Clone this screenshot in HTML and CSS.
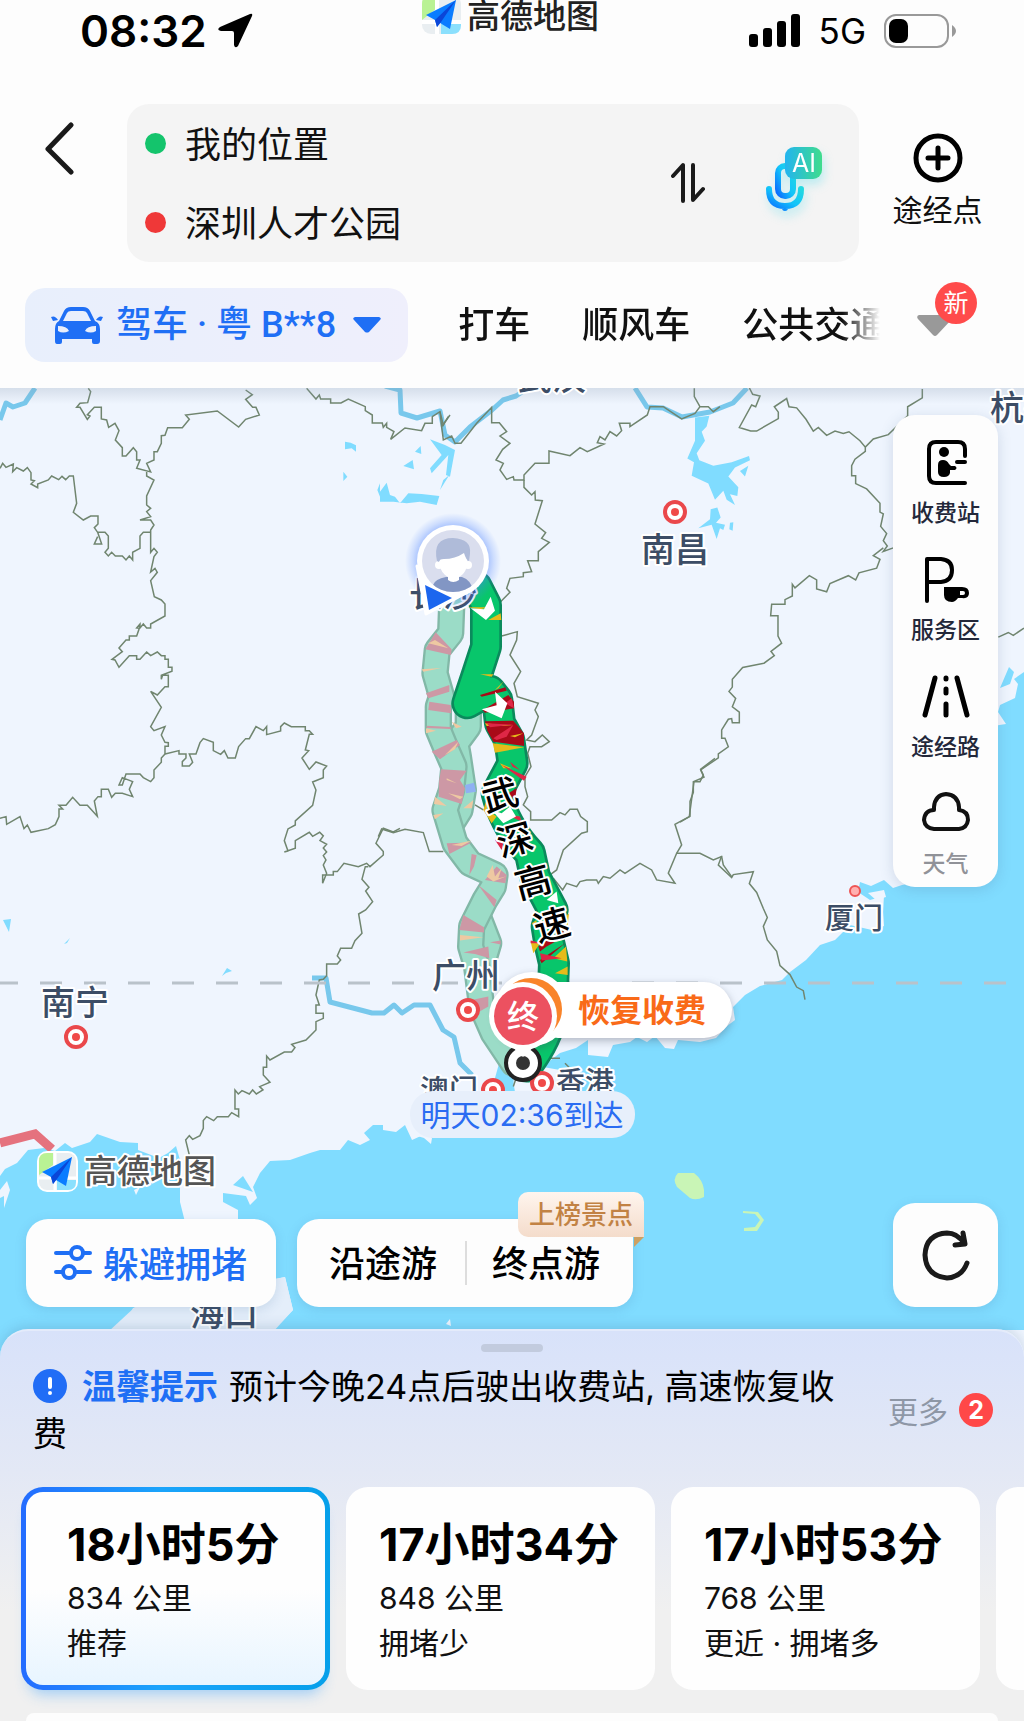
FILE: index.html
```html
<!DOCTYPE html>
<html lang="zh-CN">
<head>
    <meta charset="UTF-8">
    <meta name="viewport" content="width=device-width, initial-scale=1.0">
    <title>高德地图</title>
    <link rel="stylesheet" href="styles.css">
</head>
<body>
    <header class="header">
        <div class="status-bar">
            <div class="status-time">
                <span>08:32</span>
                <svg width="36" height="36" viewBox="0 0 36 36"><path d="M33 1Q36 0 35 3L21 33Q18 36 17 32V20Q17 18 15 18H4Q-1 17 3 14Z"/></svg>
            </div>
            <div class="brand">
                <svg width="39" height="39" viewBox="0 0 39 39">
                    <rect width="39" height="39" rx="9" fill="#e9eef1"/>
                    <path d="M0 9Q0 0 9 0H15V13L0 25Z" fill="#b9f294"/>
                    <path d="M19 39V28H39V30Q39 39 30 39Z" fill="#8be0fd"/>
                    <path d="M15 0V39M0 27H39" stroke="#fff" stroke-width="4"/>
                    <path d="M34 5L4 20L13 25L15 32L18 28L28 34Z" fill="#0a7cff"/>
                    <path d="M34 5L13 25L15 32L19 27Z" fill="#0b46d8"/>
                </svg>
                <span>高德地图</span>
            </div>
            <div class="status-icons">
                <svg width="52" height="34" viewBox="0 0 52 34"><rect y="20" width="9" height="13" rx="3"/><rect x="14" y="14" width="9" height="19" rx="3"/><rect x="28" y="7" width="9" height="26" rx="3"/><rect x="42" y="0" width="9" height="33" rx="3"/></svg>
                <span>5G</span>
                <svg width="72" height="34" viewBox="0 0 72 34"><rect x="1" y="1" width="63" height="32" rx="11" fill="none" stroke="#999" stroke-width="2"/><rect x="5" y="5" width="19" height="24" rx="7"/><path d="M68 11Q72 14 72 17T68 23Z" fill="#999"/></svg>
            </div>
        </div>

        <div class="route-row">
            <button class="back" aria-label="返回">
                <svg width="30" height="54" viewBox="0 0 30 54"><path d="M27 3L4 27L27 50" fill="none" stroke="#1a1a1a" stroke-width="5" stroke-linecap="round" stroke-linejoin="round"/></svg>
            </button>
            <div class="route-box">
                <div class="route-fields">
                    <label class="field"><i class="dot start"></i><input type="text" value="我的位置" aria-label="起点"></label>
                    <label class="field"><i class="dot end"></i><input type="text" value="深圳人才公园" aria-label="终点"></label>
                </div>
                <button class="swap" aria-label="交换">
                    <svg width="34" height="42" viewBox="0 0 34 42"><path d="M2 14L12 3V39M22 3V38L32 27" fill="none" stroke="#1a1a1a" stroke-width="4" stroke-linecap="round" stroke-linejoin="round"/></svg>
                </button>
                <button class="mic" aria-label="语音">
                    <svg width="60" height="72" viewBox="0 0 60 72">
                        <defs>
                            <linearGradient id="micFill" x1="0" y1="1" x2="1" y2="0"><stop offset="0" stop-color="#0a6cff"/><stop offset=".5" stop-color="#12c4fa"/><stop offset="1" stop-color="#22d8e0"/></linearGradient>
                            <linearGradient id="aiFill"><stop offset="0" stop-color="#22b4f0"/><stop offset="1" stop-color="#40dc8c"/></linearGradient>
                        </defs>
                        <g fill="none" stroke="url(#micFill)" stroke-width="6" stroke-linecap="round"><rect x="13" y="19" width="15" height="30" rx="7"/><path d="M4 42Q4 59 20 59T36 42M20 59L20 61"/></g>
                        <rect x="20" y="0" width="37" height="32" rx="9" fill="url(#aiFill)"/>
                        <text x="39" y="25" class="ai-text">AI</text>
                    </svg>
                </button>
            </div>
            <button class="waypoint">
                <svg width="50" height="50" viewBox="0 0 50 50"><g fill="none" stroke="#000" stroke-width="5" stroke-linecap="round"><circle cx="25" cy="25" r="22"/><path d="M25 15V35M15 25H35"/></g></svg>
                <span>途经点</span>
            </button>
        </div>

        <nav class="modes">
            <button class="mode active">
                <svg width="52" height="37" viewBox="0 0 52 37"><path d="M8 14L13 4Q15 0 20 0H32Q37 0 39 4L44 14Q49 16 49 22V34Q49 37 46 37H43Q41 37 41 35V32H11V35Q11 37 9 37H6Q4 37 4 34V22Q4 16 8 14ZM12 14H40L36 6Q35 4 32 4H20Q17 4 16 6Z" fill-rule="evenodd"/><path d="M7 19Q16 19 18 24Q12 27 7 24ZM45 19Q36 19 34 24Q40 27 45 24Z" fill="#e8eefb"/><path d="M0 10Q4 8 7 13L2 14ZM52 10Q48 8 45 13L50 14Z"/></svg>
                <span class="plate">驾车 · 粤 B**8</span>
                <svg width="28" height="16" viewBox="0 0 28 16"><path d="M2 0H26Q29 1 27 3L16 15Q14 16 12 15L1 3Q-1 1 2 0Z"/></svg>
            </button>
            <div class="mode-list">
                <button class="mode">打车</button>
                <button class="mode">顺风车</button>
                <button class="mode">公共交通</button>
            </div>
            <button class="more-modes" aria-label="更多方式">
                <svg width="36" height="21" viewBox="0 0 36 21"><path d="M2 0H34Q37 1 35 4L20 20Q18 22 16 20L1 4Q-1 1 2 0Z" fill="#999"/></svg>
                <span class="new-badge">新</span>
            </button>
        </nav>
    </header>

    <main class="map">
        <svg class="map-canvas" viewBox="0 388 1024 970">
            <defs>
                <linearGradient id="topShade" x1="0" y1="0" x2="0" y2="1"><stop offset="0" stop-color="#8a9bb0" stop-opacity=".25"/><stop offset="1" stop-color="#8a9bb0" stop-opacity="0"/></linearGradient>
                <radialGradient id="glow"><stop offset=".65" stop-color="#4a80ff" stop-opacity=".55"/><stop offset=".85" stop-color="#4a80ff" stop-opacity=".2"/><stop offset="1" stop-color="#4a80ff" stop-opacity="0"/></radialGradient>
                <clipPath id="avatarClip"><circle cx="453" cy="561" r="31"/></clipPath>
            </defs>
            <rect y="388" width="1024" height="970" fill="#eff5fe"/>

            <!-- sea -->
            <path class="sea" d="M1024 672L1014 679L1018 684L1015 698L1000 705L998 712L1006 724L980 728V870L902 885L893 888L884 880L871 886L860 882L858 892L870 900L884 896L883 912L884 926L872 930L850 925L835 940L820 945L806 960L790 972L782 980L760 986L745 995L733 1007L735 1020L727 1026L716 1038L700 1042L678 1040L674 1049L665 1048L655 1036L647 1042L637 1037L630 1042L613 1045L608 1057L588 1055V1040L576 1048L560 1053L551 1060L543 1067L560 1070L572 1075V1092L515 1092L513 1080L502 1062L497 1080L500 1100L412 1140L405 1125L396 1132L383 1130V1125H373L364 1133L370 1140L360 1145L348 1140L340 1150H320L310 1153L290 1160L270 1161L260 1173L253 1187L257 1198L250 1205L246 1196L223 1193V1202L238 1210V1222H185L180 1202V1160L176 1146L168 1153L159 1158L138 1150V1143L120 1142L97 1134L90 1142L72 1148L65 1143L55 1151L44 1148L28 1150L17 1163L5 1169L0 1176V1358H110L133 1308L285 1277L293 1310L273 1330H1024Z"/>
            <path class="sea" d="M500 1060L515 1070L512 1092H500L495 1078ZM233 1185L243 1176L253 1192ZM1000 688L1009 667L1014 672L1010 684Z"/>
            <path d="M0 1190L7 1181L10 1190L4 1208L4 1196L0 1198ZM134 1190L140 1187L136 1195ZM414 1135L422 1130L432 1138L431 1144L424 1138ZM868 893L884 890L886 897L876 900ZM446 1324L450 1319L451 1326Z" fill="#eff5fe"/>
            <path d="M135 1307L285 1277L293 1310L273 1332H108Z" fill="#e4eefa"/>
            <path d="M678 1173H694Q703 1180 704 1190V1197Q696 1201 690 1198L677 1187Q672 1179 678 1173ZM743 1211L758 1212L764 1220L757 1231H744V1228L755 1227L760 1220L755 1214L743 1213Z" fill="#c9f5b6"/>

            <!-- lakes -->
            <g class="sea" transform="translate(380 380) scale(.3333)">
                <path d="M150 178L195 195L225 210L210 290L198 285L205 225L155 280L150 265L185 225ZM105 215L122 198L124 222ZM70 258L98 240L102 268ZM0 335L20 308L30 345L45 350L60 370L85 340L125 342L178 348L170 375L120 365L80 370L40 365L0 365Z"/>
                <path d="M190 300L208 285L180 330ZM0 310L0 350L-8 330ZM-105 185L-88 188L-72 196L-72 215L-85 205L-105 208ZM-110 275L-98 290L-110 303Z"/>
            </g>
            <g class="sea" transform="translate(680 380) scale(.3333 .3571)">
                <path d="M45 105L88 100L80 130L65 145L75 170L50 205L58 225L100 240L155 230L207 213L210 225L165 245L145 270L175 300L172 325L150 320L165 350L140 335L130 310L105 335L85 290L35 268L42 230L22 220L45 170Z"/>
                <path d="M92 362L112 357L122 385L108 400L135 405L130 420L120 415L110 445L95 405L55 415L90 390ZM150 400L160 398L158 422L148 418ZM180 255L205 240L195 270Z"/>
            </g>
            <path class="sea" d="M3 920L11 919L9 932ZM64 944L70 938L67 943ZM222 976L227 968L232 971L226 973Z"/>

            <!-- rivers -->
            <g class="river">
                <path d="M35 388L25 403L13 407L6 403L0 420"/>
                <path d="M385 386L400 390L401 413L417 418L440 411L445 435L455 442L470 427L492 410L503 400L516 396L528 388"/>
                <path d="M635 388L647 407L663 408L682 417L710 412L733 403L747 388"/>
                <path d="M312 978H326L330 1002L372 1013H384L394 1005L402 1013L414 1005H430L443 1030L454 1037L460 1063L472 1075"/>
            </g>

            <!-- province borders -->
            <g class="border" transform="translate(0 380) scale(.3333)">
                <path d="M265 25L272 35L263 68L240 70L230 82L240 82L262 118L270 108L262 104L283 82H304V117L320 120L326 142L345 130L357 152L346 180L367 203V228H378L400 203L410 215V240H420L410 265L452 276L440 250L462 240V215H472L484 190V167L495 166L503 143H547L568 118L557 105L652 93L716 141L737 118L778 105L768 82H758L737 58L757 44L737 30"/>
                <path d="M440 276V288L462 300L440 348V375L452 385L440 395L452 410L420 420H452L462 435L452 450V517L462 505L472 517L462 530L452 576L465 565L472 577L452 602L463 650L484 660L495 672V708L452 732V744H440L430 732L420 744V732L410 744L418 745L410 768H388V780H378L357 804L367 815L336 838L345 840L357 862L388 827H410V838H420L440 816L452 827L472 816L484 827H495V838H505V862H516V874L484 886V898L488 885L505 886V920H495L472 945L452 934L484 982L452 1040L462 1052L495 1040L484 1065L495 1087L505 1088V1099H495V1122L537 1112V1122H558V1134L547 1145V1158H568L578 1147L568 1122H588L600 1088L610 1076L640 1087V1112L662 1123L673 1112L684 1134H706L716 1100L737 1076H748L768 1040L790 1052L800 1040V1064L842 1053V1040L853 1029L874 1040H916V1052H928L938 1063H928L916 1110L926 1112L906 1134L928 1168L948 1146L980 1158L970 1170V1193L938 1206L948 1230L938 1276L886 1323V1335L864 1347L853 1382L864 1413L853 1416L886 1405V1382L928 1357L938 1369L959 1357L970 1368L960 1382L980 1393L970 1404L980 1416L970 1427L978 1440L970 1455L980 1480L968 1510V1485H1000V1475H1012L1032 1450L1075 1460L1100 1450L1110 1460L1150 1425V1415L1128 1390L1150 1345L1180 1356L1200 1345"/>
                <path d="M0 265L8 250L18 262L40 252L38 275L50 263L70 273L82 263L93 278V300L103 302L93 312L113 323V312L145 300L155 288L176 299L186 289L197 299L208 288H220L230 370L220 397L250 420L272 408H294V432L283 443L293 457H315L325 468V505L315 517L325 528L335 517L346 528H367L378 540L388 528L398 540V517L420 505V468L430 457H452M293 457L305 492H283L293 470"/>
                <path d="M495 1122L484 1134V1147L462 1170V1193L452 1205L430 1193L420 1182H378L367 1215H357L367 1193L398 1205L388 1228L398 1250L367 1240H346L335 1252L325 1228H304V1250H294L283 1263L292 1309L262 1276H240L218 1252L198 1276H177L188 1287H177V1310L166 1334L145 1346L93 1357L82 1335L72 1346L60 1310L20 1333L18 1310L0 1315"/>
                <path d="M920 25L948 57L958 45L962 57H992V69H1023L1045 57L1096 80V92L1117 105V129H1147L1150 142L1160 130V142L1182 155L1172 178L1215 144L1265 152L1275 130H1297V110L1320 95L1330 135L1345 110"/>
            </g>
            <g class="border" transform="translate(0 840) scale(.3333)">
                <path d="M1105 80H1096L1086 118L1107 142L1097 153L1118 185L1097 210L1076 222L1086 280L1065 302L1055 325H1022L1012 348L1022 360L1012 372H980V407L970 418L958 420L948 465L958 495H948V520H970V535L948 545V570L918 600L875 613L885 623L875 636H853L810 660L800 648V682H790V705L810 727L779 740L789 750L769 762L758 750L748 762L726 752L715 762L705 750V807H716V830L695 818L685 830H652L641 842L620 830L610 842V865L600 887L578 898L568 887L557 900L568 945"/>
            </g>
            <g class="border" transform="translate(380 380) scale(.3333)">
                <path d="M180 95L185 140L210 105M185 140L190 180L215 168L225 190H243L290 130L335 82V128H358L380 155L360 168L390 190L368 208L348 240L370 250L360 270L380 298L400 290L402 300H432V285L465 250H507V213L570 227L600 203L622 215L672 192L652 188L660 170L675 180L690 155L710 168L725 152L718 130H750V140L802 105L810 80H850L905 117L945 100L960 80L943 50V25M960 80H985L1000 95L1020 80"/>
                <path d="M432 300V322L455 345L465 335L466 360L487 362L465 432L497 458L485 475L508 487L475 515V542H443L455 575L430 578V590L390 595L380 625L390 637L355 672M365 768L412 755L410 780L390 825L422 875L402 910L412 950L475 970L465 990L475 1010L455 1065L440 1080L465 1085L487 1065L508 1085L485 1100H450L443 1120L453 1160L435 1190V1220L443 1250L430 1275L452 1295V1320L515 1320L540 1298L555 1305L570 1288H592L602 1310L622 1325V1355L605 1360L550 1410L530 1470L510 1485M520 1495L548 1530L560 1510L590 1520L600 1505L620 1500H650L655 1510L670 1490L690 1495L720 1470L735 1480L780 1450L815 1470L830 1500L885 1510L865 1480L890 1420L905 1395L885 1333L928 1310L942 1205H960L970 1185L962 1168L1005 1135"/>
                <path d="M-5 1370L5 1347L40 1358L75 1348L130 1358L148 1415H190M285 1275L310 1290M400 2120L410 2090M510 2035H540M555 2050L570 2065M890 1420H960L1000 1440L1025 1430L1030 1455L1055 1490"/>
            </g>
            <g class="border" transform="translate(680 380) scale(.3333 .3571)">
                <path d="M208 22L218 40L240 45L227 75L215 70L178 133L212 143H230L295 108V90L283 75L320 52L327 75L350 78L378 110L400 143L415 133L440 155L465 143L490 150L507 145L540 170L556 188L580 165L625 153L650 130L683 100V75L727 50V25M556 188V200L525 222L515 240V268H527V290L560 305L600 345V370L610 375L602 410L620 430L610 450L622 465L610 480L640 470M610 470L580 492L600 502L590 527L537 540L527 560L505 548L450 570L440 593L410 585V560L388 548L345 582L337 572V605L315 615V628H275L272 660H294V717L305 737L273 760L283 772L252 793L188 805L157 838V860L147 872L167 892L157 915L178 930V960H157L155 948L145 950L125 980V1003H135L145 1027L115 1047V1058L62 1092L72 1112L40 1125V1155L30 1180V1222L0 1238"/>
                <path d="M125 1333L115 1358L155 1393L160 1385L220 1377L208 1410L230 1435L250 1480L262 1505L250 1530L262 1568L290 1600L300 1640L330 1665L350 1700L370 1710L375 1735M955 720L985 707L1000 715L1032 695"/>
            </g>
            <path d="M-4 983H570M632 983H1024" stroke="#b9c2ca" stroke-width="3" stroke-dasharray="22 22"/>
            <path d="M0 1143L35 1134L52 1149" fill="none" stroke="#e5727e" stroke-width="9"/>
            <rect y="388" width="1024" height="16" fill="url(#topShade)"/>

            <!-- city names -->
            <g class="city">
                <text x="518" y="390">武汉</text>
                <text x="641" y="562">南昌</text>
                <text x="41" y="1015">南宁</text>
                <text x="990" y="420">杭州</text>
                <text x="190" y="1326">海口</text>
                <text x="825" y="929" class="small">厦门</text>
            </g>
            <g class="spot"><circle cx="675" cy="512" r="10"/><circle cx="76" cy="1037" r="10"/></g>
            <g class="spot-core"><circle cx="675" cy="512" r="4"/><circle cx="76" cy="1037" r="4"/></g>
            <circle cx="855" cy="891" r="5" fill="#ffb0b0" stroke="#ee5555" stroke-width="2"/>

            <!-- alternative routes -->
            <g transform="translate(380 380) scale(.3333)">
                <path class="alt-edge" d="M265 1000V1040L228 1090L235 1130L250 1230L240 1290L215 1330M295 1610L326 1690L305 1760"/>
                <path class="alt-fill" d="M265 1000V1040L228 1090L235 1130L250 1230L240 1290L215 1330M295 1610L326 1690L305 1760"/>
                <path class="alt-edge" d="M215 680L212 760L172 810L165 880L185 950L175 980V1050L200 1110L222 1160L215 1230L195 1290L225 1390L270 1450L345 1485L340 1520L315 1560L275 1640L272 1700L290 1760L305 1880L340 1960L400 2050"/>
                <path class="alt-fill" d="M215 680L212 760L172 810L165 880L185 950L175 980V1050L200 1110L222 1160L215 1230L195 1290L225 1390L270 1450L345 1485L340 1520L315 1560L275 1640L272 1700L290 1760L305 1880L340 1960L400 2050"/>
                <path fill="#cd98a5" d="M167 757L215 808L213 825L136 808ZM138 940L208 915V935L145 955ZM148 965L212 975L214 1000L145 990ZM140 1037L212 1041V1047L140 1044ZM155 1115L230 1080L240 1095L180 1138ZM183 1168L260 1172L240 1200L255 1225L245 1272L176 1250L177 1205ZM200 1390L275 1388L208 1422ZM275 1422L290 1426L282 1460L268 1485ZM315 1500L350 1460L380 1485L376 1510ZM295 1515L350 1560L343 1582ZM250 1605L312 1642V1658L238 1650ZM250 1718L325 1700L328 1735L285 1722ZM330 1687L362 1682V1694ZM275 1860L325 1850V1880L290 1900Z"/>
                <path fill="#eec9a2" d="M125 868L185 864L130 875ZM138 1045L168 1052L138 1060ZM165 1250L200 1278L162 1272ZM160 1305L190 1300L165 1318ZM215 1025L245 1040L228 1045ZM320 1490L338 1455L345 1490L365 1465L355 1495L378 1490L340 1505ZM240 1665L310 1672L240 1682ZM250 1285L280 1260L276 1285ZM145 790L205 805L165 780ZM195 1125L235 1085L225 1108ZM215 1395L275 1382L245 1398ZM200 1195L230 1210L200 1200ZM205 1240L250 1250L240 1258Z"/>
                <path fill="#8fb0f2" d="M255 1215L282 1208L288 1235L258 1240Z"/>
            </g>

            <!-- selected route -->
            <g transform="translate(380 380) scale(.3333)">
                <path class="route-edge" d="M290 620L318 675V800L292 880L262 970L330 932L352 960L360 1030L388 1080L398 1150L350 1240Q375 1340 450 1420L465 1490L518 1590L500 1640L508 1690L522 1750L517 1880Q515 1960 440 2060"/>
                <path class="route-fill" d="M290 620L318 675V800L292 880L262 970L330 932L352 960L360 1030L388 1080L398 1150L350 1240Q375 1340 450 1420L465 1490L518 1590L500 1640L508 1690L522 1750L517 1880Q515 1960 440 2060"/>
                <path fill="#a90a18" d="M300 945L376 922L380 932L305 950ZM308 990L385 945L402 965V985L315 998ZM315 1024L400 1022L432 1060V1098L340 1085L322 1052ZM385 1240L410 1225L405 1260ZM475 1700L545 1650L562 1665L500 1700L480 1715ZM480 1740L555 1690L485 1750Z"/>
                <path fill="#e6bb1a" d="M262 682H330L300 688ZM325 720L362 700L364 720ZM300 883H340L335 890ZM345 930L372 903L355 925ZM315 1030L400 1038L320 1038ZM338 1090L433 1102L345 1118ZM360 1150L395 1165L370 1165ZM310 1290L322 1250V1290L350 1310L335 1330ZM452 1685L480 1690L460 1720ZM520 1735L558 1700L562 1745ZM525 1780L563 1760V1785ZM548 1620L567 1600L563 1640ZM455 1630L470 1620L468 1650ZM390 1068L430 1060L405 1072Z"/>
                <path fill="#de2746" d="M320 1030L400 1034L330 1042ZM340 1075L400 1035L380 1070L350 1080ZM375 970L395 955L402 985ZM365 1155L440 1190L432 1202ZM370 1300L420 1310L425 1325ZM452 1682L490 1690L452 1690ZM480 1720L545 1735L485 1742ZM345 1380L375 1370L365 1410ZM390 1145L420 1170L398 1160Z"/>
                <path fill="#fff" d="M272 685L312 688L332 650L345 692L318 720ZM305 988L350 976L345 935L382 970L365 1015ZM335 1290L365 1300L390 1280L408 1310L370 1330ZM500 1560L530 1535L535 1570Z"/>
            </g>
            <g class="road-name">
                <text transform="translate(500 795) rotate(-15)" y="13">武</text>
                <text transform="translate(515 840) rotate(-15)" y="13">深</text>
                <text transform="translate(533 882) rotate(-15)" y="13">高</text>
                <text transform="translate(552 925) rotate(-15)" y="13">速</text>
            </g>
            <g class="city">
                <text x="409" y="607">长沙</text>
                <text x="432" y="988">广州</text>
                <text x="420" y="1101" class="small">澳门</text>
                <text x="556" y="1093" class="small">香港</text>
            </g>
            <g class="spot"><circle cx="468" cy="1010" r="10"/><circle cx="493" cy="1090" r="10"/><circle cx="542" cy="1083" r="10"/></g>
            <g class="spot-core"><circle cx="468" cy="1010" r="4"/><circle cx="493" cy="1090" r="4"/><circle cx="542" cy="1083" r="4"/></g>

            <!-- my position -->
            <circle cx="453" cy="561" r="48" fill="url(#glow)"/>
            <path d="M417 566L426 614L472 590Z" fill="#fff" stroke="#fff" stroke-width="3" stroke-linejoin="round"/>
            <circle cx="453" cy="561" r="36" fill="#fff"/>
            <g clip-path="url(#avatarClip)">
                <rect x="420" y="528" width="66" height="66" fill="#dadeee"/>
                <path d="M433 594V585Q435 579 446 577H462Q472 580 474 594Z" fill="#8296c4"/>
                <circle cx="439" cy="565" r="4" fill="#fff"/><circle cx="468" cy="565" r="4" fill="#fff"/>
                <path d="M440 550H467V566Q465 574 459 577V580Q453 584 448 580V577Q441 573 440 566Z" fill="#fff"/>
                <path d="M437 561Q432 538 453 538Q472 539 470 554L469 561Q466 560 464 553Q455 559 444 559Q439 559 439 562Z" fill="#afbbd9"/>
            </g>
            <path d="M425 585L452 598L429 610Z" fill="#1c66ee"/>

            <!-- destination -->
            <g class="lift">
                <rect x="530" y="982" width="202" height="56" rx="28" fill="#fff"/>
                <circle cx="532" cy="1009" r="37" fill="#fff"/>
            </g>
            <circle cx="531" cy="1009" r="31" fill="#f9842a"/>
            <circle cx="523" cy="1063" r="17" fill="#fff" stroke="#222" stroke-width="4"/>
            <circle cx="523" cy="1063" r="7" fill="#333"/>
            <path d="M505 1040L523 1057L541 1040Z" fill="#fff"/>
            <circle cx="523" cy="1016" r="34" fill="#fff"/>
            <circle cx="523" cy="1016" r="29" fill="#ec5160"/>
            <text x="523" y="1028" class="pin-text">终</text>
            <text x="578" y="1022" class="toll-text">恢复收费</text>
            <rect x="410" y="1091" width="225" height="47" rx="23" fill="#e7effb"/>
            <text x="522" y="1126" class="arrive-text">明天02:36到达</text>

            <!-- watermark -->
            <g transform="translate(38 1152)">
                <rect x="-1" y="-1" width="41" height="41" rx="10" fill="#fff"/>
                <rect x="1" y="1" width="37" height="37" rx="8" fill="#e9eef1"/>
                <path d="M1 9Q1 1 9 1H15V13L1 23Z" fill="#b9f294"/>
                <path d="M19 38V28H38V30Q38 38 30 38Z" fill="#8be0fd"/>
                <path d="M17 1V38M1 26H38" stroke="#fff" stroke-width="3"/>
                <path d="M34 5L4 20L13 25L15 32L18 28L28 34Z" fill="#0a7cff"/>
                <path d="M34 5L13 25L15 32L19 27Z" fill="#0b46d8"/>
            </g>
            <text x="84" y="1183" class="watermark">高德地图</text>
        </svg>

        <div class="side-tools">
            <button>
                <svg width="48" height="48" viewBox="0 0 48 48"><path d="M43 17V10Q43 3 36 3H14Q7 3 7 10V37Q7 44 14 44H43M35 23H43" fill="none" stroke="#000" stroke-width="4" stroke-linecap="round" stroke-linejoin="round"/><circle cx="22" cy="13" r="5"/><path d="M16 26Q16 21 21 21Q25 21 27 25L29 27H33Q36 29 33 31H28V34Q27 38 22 38Q16 38 16 33Z"/></svg>
                <span>收费站</span>
            </button>
            <button>
                <svg width="48" height="48" viewBox="0 0 48 48"><path d="M5 45V3H19Q30 4 30 14Q30 25 19 26H5" fill="none" stroke="#000" stroke-width="4" stroke-linecap="round" stroke-linejoin="round"/><path d="M22 31H40Q47 31 47 37T40 42H36Q33 46 30 46Q22 46 22 39ZM38 35V39H41Q43 39 43 37T41 35Z" fill-rule="evenodd"/></svg>
                <span>服务区</span>
            </button>
            <button>
                <svg width="48" height="48" viewBox="0 0 48 48"><path d="M13 5L3 42M35 5L45 42M24 5V6M24 16V20M24 31V42" fill="none" stroke="#000" stroke-width="5" stroke-linecap="round"/></svg>
                <span>途经路</span>
            </button>
            <button class="off">
                <svg width="48" height="48" viewBox="0 0 48 48"><path d="M12 20V17Q13 5 24 4Q36 5 37 17V20Q46 21 46 30Q45 38 37 39H12Q3 38 2 30Q3 20 12 20Z" fill="none" stroke="#111" stroke-width="4" stroke-linejoin="round"/></svg>
                <span>天气</span>
            </button>
        </div>

        <div class="map-actions">
            <button class="panel avoid">
                <svg width="38" height="36" viewBox="0 0 38 36"><g fill="none" stroke="#1f6ff5" stroke-width="4" stroke-linecap="round"><path d="M2 9H15M30 9H36M2 28H8M23 28H36"/><circle cx="23" cy="9" r="6"/><circle cx="15" cy="28" r="6"/></g></svg>
                <span>躲避拥堵</span>
            </button>
            <div class="panel tours">
                <button>沿途游</button>
                <button>终点游</button>
                <span class="rank-badge">上榜景点</span>
            </div>
            <button class="panel refresh" aria-label="刷新">
                <svg width="50" height="52" viewBox="0 0 50 52"><path d="M46 34Q41 48 26 49Q5 47 4 26Q5 5 26 4Q36 4 43 14M42 4L44 15L34 16" fill="none" stroke="#1a1a1a" stroke-width="5" stroke-linecap="round" stroke-linejoin="round"/></svg>
            </button>
        </div>
    </main>

    <section class="sheet">
        <div class="handle"></div>
        <div class="notice">
            <p><svg width="34" height="34" viewBox="0 0 34 34"><circle cx="17" cy="17" r="17" fill="#216df6"/><path d="M17 10V18M17 24V24" stroke="#fff" stroke-width="4" stroke-linecap="round"/></svg><strong>温馨提示</strong>预计今晚24点后驶出收费站, 高速恢复收费</p>
            <a href="#" class="notice-more">更多<b>2</b></a>
        </div>
        <div class="plans">
            <button class="plan selected"><strong>18小时5分</strong><span>834 公里</span><span>推荐</span></button>
            <button class="plan"><strong>17小时34分</strong><span>848 公里</span><span>拥堵少</span></button>
            <button class="plan"><strong>17小时53分</strong><span>768 公里</span><span>更近 · 拥堵多</span></button>
            <button class="plan" aria-label="更多方案"></button>
        </div>
        <div class="detail"></div>
    </section>
</body>
</html>
```
FILE: styles.css
```css
* { margin: 0; padding: 0; box-sizing: border-box; }
body { font-family: Inter, "Noto Sans CJK SC", sans-serif; background: #f0f0f0; color: #111; min-height: 100vh; display: flex; flex-direction: column; overflow-x: hidden; }
button, input { font: inherit; color: inherit; background: none; border: none; }
button { cursor: pointer; }
svg { display: block; flex: none; }
svg text { font-family: "Noto Sans CJK SC", sans-serif; }

/* Header */
.header { background: #fdfdfd; padding-bottom: 26px; }
.status-bar { display: grid; grid-template-columns: 1fr auto 1fr; height: 62px; }
.status-time { display: flex; align-items: center; gap: 10px; padding-left: 80px; font-size: 44px; font-weight: 600; color: #000; }
.brand { display: flex; align-items: center; gap: 6px; height: 28px; padding-right: 3px; font-size: 33px; font-weight: 500; color: #222; }
.status-icons { display: flex; align-items: center; justify-content: flex-end; gap: 18px; padding-right: 68px; font-size: 35px; color: #000; }
.route-row { display: grid; grid-template-columns: 127px minmax(0, 1fr) 165px; margin-top: 42px; }
.back { align-self: start; padding: 18px 0 0 44px; }
.route-box { display: flex; align-items: center; height: 158px; padding: 0 34px 0 18px; background: #f4f4f4; border-radius: 22px; }
.route-fields { flex: 1; min-width: 0; }
.field { display: flex; align-items: center; gap: 19px; height: 79px; }
.field input { flex: 1; min-width: 0; font-size: 36px; padding-bottom: 4px; outline: none; }
.dot { width: 21px; height: 21px; border-radius: 50%; background: #14c46c; }
.dot.end { background: #ef3838; }
.swap { margin-right: 60px; }
.mic { filter: drop-shadow(2px 6px 5px rgba(30, 210, 230, 0.25)); }
.ai-text { font-family: Inter, sans-serif; font-size: 25px; fill: #fff; text-anchor: middle; }
.waypoint { display: flex; flex-direction: column; align-items: center; align-self: center; gap: 6px; font-size: 30px; line-height: 42px; padding: 0 8px 2px 0; }
.modes { display: flex; align-items: center; margin-top: 26px; padding: 0 25px; }
.mode { font-size: 36px; font-weight: 500; white-space: nowrap; flex: none; line-height: 50px; }
.mode.active { display: flex; align-items: center; gap: 13px; height: 74px; padding: 0 27px 0 26px; border-radius: 20px; background: linear-gradient(90deg, #e8effc, #efeffc); color: #1f6ff5; font-family: Roboto, "Noto Sans CJK SC", sans-serif; }
.mode.active svg { fill: #1f6ff5; }
.plate { padding-right: 4px; }
.mode-list { display: flex; flex: 1; min-width: 0; gap: 52px; padding-left: 50px; overflow: hidden; -webkit-mask-image: linear-gradient(90deg, #000 92%, transparent); mask-image: linear-gradient(90deg, #000 92%, transparent); }
.more-modes { position: relative; margin: 0 46px 0 37px; }
.new-badge { position: absolute; left: 18px; bottom: 12px; width: 42px; height: 42px; border-radius: 50%; background: #ff4b4b; color: #fff; font-size: 25px; line-height: 42px; text-align: center; }

/* Map */
.map { position: relative; }
.map-canvas { width: 100%; height: auto; }
.sea { fill: #80dcff; }
.river { fill: none; stroke: #78c8ec; stroke-width: 5; stroke-linejoin: round; }
.border path { fill: none; stroke: #70856f; stroke-width: 1.5px; vector-effect: non-scaling-stroke; }
.city text, .road-name text, .watermark { font-weight: 500; paint-order: stroke; stroke: #fff; stroke-width: 4px; stroke-linejoin: round; }
.city text { font-size: 34px; fill: #3c4d66; }
.city .small { font-size: 29px; }
.spot circle { fill: #fff; stroke: #ea484b; stroke-width: 4px; }
.spot-core { fill: #f04a48; }
.alt-edge, .alt-fill { fill: none; stroke-linecap: round; stroke-linejoin: round; }
.alt-edge { stroke: #82b8a7; stroke-width: 82; }
.alt-fill { stroke: #9bdcc7; stroke-width: 68; }
.route-edge, .route-fill { fill: none; stroke-linejoin: round; stroke-linecap: round; }
.route-edge { stroke: #0a8a5c; stroke-width: 96; }
.route-fill { stroke: #08c66b; stroke-width: 80; }
.road-name text { font-size: 36px; fill: #000; text-anchor: middle; }
.lift { filter: drop-shadow(0 3px 4px rgba(60, 70, 90, 0.35)); }
.pin-text { font-size: 32px; font-weight: 500; fill: #fff; text-anchor: middle; }
.toll-text { font-size: 32px; font-weight: 700; fill: #f96a18; }
.map .arrive-text { font-family: Inter, "Noto Sans CJK SC", sans-serif; font-size: 30px; fill: #2a6cf2; text-anchor: middle; }
.watermark { font-size: 33px; fill: #555; }

.side-tools { position: absolute; top: 27px; right: 26px; width: 105px; padding: 24px 0 6px; display: flex; flex-direction: column; gap: 26px; background: #fdfdfd; border-radius: 22px; box-shadow: 0 3px 14px rgba(60, 90, 130, 0.18); }
.side-tools button { display: flex; flex-direction: column; align-items: center; gap: 9px; font-size: 23px; font-weight: 500; line-height: 34px; color: #23283a; }
.side-tools .off { color: #909298; }
.map-actions { position: absolute; left: 26px; right: 26px; bottom: 51px; display: flex; align-items: flex-end; gap: 21px; }
.panel { height: 88px; display: flex; align-items: center; background: #fdfdfd; border-radius: 22px; box-shadow: 0 3px 12px rgba(50, 100, 150, 0.16); font-size: 36px; }
.avoid { gap: 11px; padding: 0 29px 2px 28px; color: #1f6ff5; font-weight: 500; }
.tours { position: relative; border-bottom-right-radius: 20px; border-top-right-radius: 0; color: #000; font-weight: 500; }
.tours button { line-height: 42px; padding: 2px 28px 0 32px; white-space: nowrap; }
.tours button + button { padding: 2px 33px 0 25px; border-left: 2px solid #ddd; }
.rank-badge { position: absolute; right: -11px; top: -27px; height: 45px; padding: 0 11px; border-radius: 10px 10px 0 10px; background: linear-gradient(#fff5ee, #f4dccb); color: #c28244; font-size: 26px; font-weight: 500; line-height: 45px; white-space: nowrap; }
.rank-badge::after { content: ""; position: absolute; right: 0; top: 100%; border-top: 10px solid #cda062; border-right: 10px solid transparent; }
.refresh { width: 105px; height: 104px; margin-left: auto; justify-content: center; }

/* Bottom sheet */
.sheet { position: relative; flex: 1; margin-top: -29px; padding-top: 13px; border-top: 2px solid #e4ebfb; border-radius: 28px 28px 0 0; background: linear-gradient(#d8e2fa, #e3e8f5 140px, #f0f0f0 280px); box-shadow: 0 -3px 12px rgba(60, 100, 140, 0.2); }
.handle { width: 62px; height: 8px; margin: 0 auto; border-radius: 4px; background: #c2cbde; }
.notice { display: flex; align-items: center; justify-content: space-between; padding: 11px 31px 0 33px; }
.notice p { width: 820px; font-size: 34px; line-height: 47px; color: #000; }
.notice p svg { display: inline-block; vertical-align: -4px; margin-right: 15px; }
.notice p strong { color: #1f6ff5; margin-right: 11px; }
.notice-more { display: flex; align-items: center; gap: 11px; font-size: 30px; color: #8e97a6; text-decoration: none; white-space: nowrap; }
.notice-more b { width: 34px; height: 34px; border-radius: 50%; background: #ff4848; color: #fff; font-size: 25px; line-height: 34px; text-align: center; }
.plans { display: flex; gap: 16px; padding: 30px 0 23px 21px; overflow: hidden; }
.plan { flex: 0 0 309px; height: 203px; padding: 29px 0 0 33px; display: flex; flex-direction: column; background: #fefefe; border-radius: 22px; text-align: left; font-size: 30px; line-height: 45px; color: #111; }
.plan strong { font-size: 45px; line-height: 57px; margin-bottom: 3px; color: #000; white-space: nowrap; }
.plan.selected { padding: 24px 0 0 41px; border: 5px solid transparent; background: linear-gradient(#fefefe 50%, #e8f5ff) padding-box, linear-gradient(90deg, #246cff, #1ba4fb 45%, #06a0ea) border-box; box-shadow: 0 12px 14px -8px rgba(60, 160, 250, 0.45); }
.detail { height: 8px; margin: 0 26px; border-radius: 8px 8px 0 0; background: #fdfdfd; }
```
